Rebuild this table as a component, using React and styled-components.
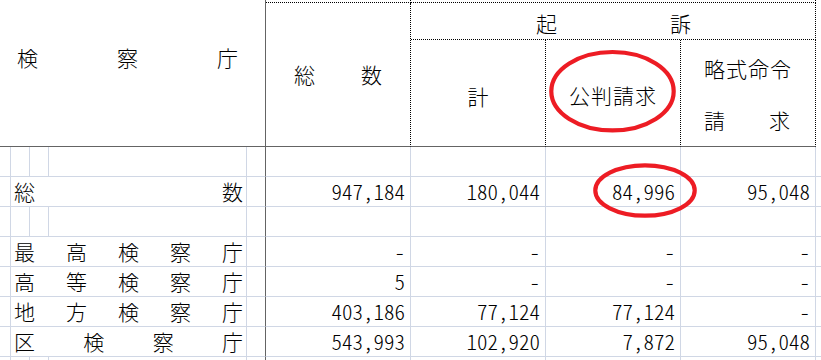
import React from "react";
import styled, { createGlobalStyle, css } from "styled-components";

const GlobalStyle = createGlobalStyle`
  html, body {
    margin: 0;
    padding: 0;
    background: #ffffff;
  }
  body {
    font-family: "Noto Sans CJK JP", "Noto Sans CJK SC", sans-serif;
    font-weight: 300;
    color: #000000;
    overflow: hidden;
  }
`;

const LINES = {
  none: "none",
  light: "1px solid #d0d7e5",
  dark: "1px solid #646464",
  dotted: "1px dotted #000000",
};

const Wrapper = styled.div`
  position: relative;
  width: 821px;
  height: 360px;
  overflow: hidden;
`;

const Sheet = styled.div`
  display: grid;
  grid-template-columns: 11px 19px 19px 198px 19px 145px 135px 135px 135px 1fr;
  grid-template-rows: 3px 37px 107px repeat(8, 30px);
  width: 821px;
`;

const Cell = styled.div`
  box-sizing: border-box;
  grid-column: ${(p) => p.$col};
  grid-row: ${(p) => p.$row};
  border-right: ${(p) => LINES[p.$right || "none"]};
  border-bottom: ${(p) => LINES[p.$bottom || "none"]};
  min-width: 0;
  min-height: 0;
`;

const Spread = styled(Cell)`
  display: flex;
  justify-content: space-between;
  align-items: ${(p) => (p.$top ? "flex-start" : "center")};
  padding: ${(p) => p.$pad || "0"};
  font-size: 21px;
  line-height: 21px;
  white-space: nowrap;
`;

const Centered = styled(Cell)`
  display: flex;
  justify-content: center;
  align-items: center;
  padding-top: ${(p) => p.$padTop || 0}px;
  font-size: 21px;
  line-height: 21px;
  letter-spacing: ${(p) => (p.$wide ? "1px" : "0")};
  white-space: nowrap;
`;

const StackCell = styled(Cell)`
  display: flex;
  flex-direction: column;
  justify-content: center;
  align-items: flex-start;
  padding: 3px 0 0 23px;
  gap: 31px;
  font-size: 21px;
  line-height: 21px;
`;

const StackLine = styled.div`
  width: 86px;
  display: flex;
  justify-content: space-between;
  white-space: nowrap;
  ${(p) =>
    p.$wide &&
    css`
      letter-spacing: 1px;
    `}
`;

const NumCell = styled(Cell)`
  display: flex;
  justify-content: flex-end;
  align-items: center;
  padding-right: 5px;
  font-size: 21px;
  line-height: 21px;
  font-feature-settings: "hwid" 1;
  white-space: nowrap;
`;

const Overlay = styled.svg`
  position: absolute;
  left: 0;
  top: 0;
  pointer-events: none;
`;

const chars = (list) => list.map((c, i) => <span key={i}>{c}</span>);

const rows = [
  { blank: true },
  {
    label: ["総", "数"],
    values: ["947,184", "180,044", "84,996", "95,048"],
  },
  { blank: true },
  { label: ["最", "高", "検", "察", "庁"], values: ["-", "-", "-", "-"] },
  { label: ["高", "等", "検", "察", "庁"], values: ["5", "-", "-", "-"] },
  {
    label: ["地", "方", "検", "察", "庁"],
    values: ["403,186", "77,124", "77,124", "-"],
  },
  {
    label: ["区", "検", "察", "庁"],
    values: ["543,993", "102,920", "7,872", "95,048"],
  },
  { blank: true },
];

const valueCols = ["6 / 7", "7 / 8", "8 / 9", "9 / 10"];

function DataRow({ row, index }) {
  const r = `${4 + index}`;
  const edge = (
    <React.Fragment>
      <Cell $col="1 / 2" $row={r} $right="light" $bottom="light" />
      <Cell $col="5 / 6" $row={r} $right="dark" $bottom="light" />
      <Cell $col="10 / 11" $row={r} $bottom="light" />
    </React.Fragment>
  );
  if (row.blank) {
    return (
      <React.Fragment>
        {edge}
        <Cell $col="2 / 3" $row={r} $right="light" $bottom="light" />
        <Cell $col="3 / 4" $row={r} $right="light" $bottom="light" />
        <Cell $col="4 / 5" $row={r} $right="light" $bottom="light" />
        {valueCols.map((c) => (
          <Cell key={c} $col={c} $row={r} $right="light" $bottom="light" />
        ))}
      </React.Fragment>
    );
  }
  return (
    <React.Fragment>
      {edge}
      <Spread $col="2 / 5" $row={r} $right="light" $bottom="light" $pad="0 3px 0 3px">
        {chars(row.label)}
      </Spread>
      {row.values.map((v, i) => (
        <NumCell key={i} $col={valueCols[i]} $row={r} $right="light" $bottom="light">
          {v}
        </NumCell>
      ))}
    </React.Fragment>
  );
}

export default function App() {
  return (
    <Wrapper>
      <GlobalStyle />
      <Sheet>
        <Spread $col="1 / 6" $row="1 / 4" $right="dark" $bottom="dark" $top $pad="47px 27px 0 17px">
          {chars(["検", "察", "庁"])}
        </Spread>
        <Cell $col="6 / 7" $row="1 / 2" $right="dotted" $bottom="dotted" />
        <Cell $col="7 / 10" $row="1 / 2" $right="dotted" $bottom="dotted" />
        <Spread $col="6 / 7" $row="2 / 4" $right="dotted" $bottom="dark" $pad="0 28px 0 28px">
          {chars(["総", "数"])}
        </Spread>
        <Spread $col="7 / 10" $row="2 / 3" $right="dotted" $bottom="dotted" $pad="4px 124px 0 125px">
          {chars(["起", "訴"])}
        </Spread>
        <Centered $col="7 / 8" $row="3 / 4" $right="dotted" $bottom="dark" $padTop={7}>
          計
        </Centered>
        <Centered $col="8 / 9" $row="3 / 4" $right="dotted" $bottom="dark" $padTop={5} $wide>
          公判請求
        </Centered>
        <StackCell $col="9 / 10" $row="3 / 4" $right="dotted" $bottom="dark">
          <StackLine $wide>
            <span>略式命令</span>
          </StackLine>
          <StackLine>
            <span>請</span>
            <span>求</span>
          </StackLine>
        </StackCell>
        <Cell $col="10 / 11" $row="1 / 4" />
        {rows.map((row, i) => (
          <DataRow key={i} row={row} index={i} />
        ))}
      </Sheet>
      <Overlay width="821" height="360" viewBox="0 0 821 360">
        <ellipse cx="612.5" cy="91.2" rx="61.2" ry="39.2" fill="none" stroke="#ed1c24" strokeWidth="4.2" />
        <ellipse cx="645" cy="190.5" rx="49.7" ry="25.2" fill="none" stroke="#ed1c24" strokeWidth="4.2" />
      </Overlay>
    </Wrapper>
  );
}
